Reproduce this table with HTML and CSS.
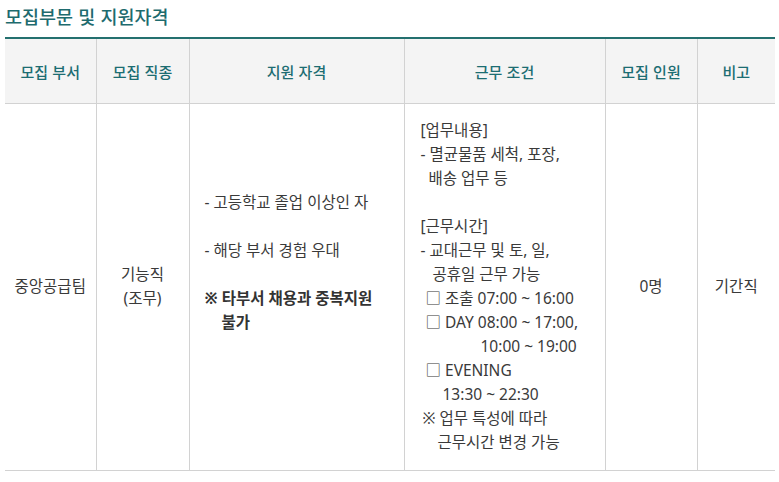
FILE: index.html
```html
<!DOCTYPE html>
<html lang="ko">
<head>
<meta charset="utf-8">
<title>모집부문 및 지원자격</title>
<link rel="stylesheet" href="styles.css">
</head>
<body>
<div class="wrap">
  <h2 class="title">모집부문 및 지원자격</h2>
  <table class="recruit">
    <colgroup>
      <col class="c1"><col class="c2"><col class="c3"><col class="c4"><col class="c5"><col class="c6">
    </colgroup>
    <thead>
      <tr>
        <th>모집 부서</th>
        <th>모집 직종</th>
        <th>지원 자격</th>
        <th>근무 조건</th>
        <th>모집 인원</th>
        <th>비고</th>
      </tr>
    </thead>
    <tbody>
      <tr>
        <td>중앙공급팀</td>
        <td>기능직<br>(조무)</td>
        <td class="left qual">
          <div class="ln">- 고등학교 졸업 이상인 자</div>
          <div class="ln blank"></div>
          <div class="ln">- 해당 부서 경험 우대</div>
          <div class="ln blank"></div>
          <div class="ln strong">※ 타부서 채용과 중복지원</div>
          <div class="ln strong i-bul">불가</div>
          <div class="ln blank"></div>
          <div class="ln blank"></div>
        </td>
        <td class="left cond">
          <div class="ln">[업무내용]</div>
          <div class="ln">- 멸균물품 세척, 포장,</div>
          <div class="ln i1">배송 업무 등</div>
          <div class="ln blank"></div>
          <div class="ln">[근무시간]</div>
          <div class="ln">- 교대근무 및 토, 일,</div>
          <div class="ln i2">공휴일 근무 가능</div>
          <div class="ln i3">□ 조출 07:00 ~ 16:00</div>
          <div class="ln i3">□ DAY 08:00 ~ 17:00,</div>
          <div class="ln i4">10:00 ~ 19:00</div>
          <div class="ln i3">□ EVENING</div>
          <div class="ln i5">13:30 ~ 22:30</div>
          <div class="ln i6">※ 업무 특성에 따라</div>
          <div class="ln i7">근무시간 변경 가능</div>
        </td>
        <td>0명</td>
        <td>기간직</td>
      </tr>
    </tbody>
  </table>
</div>
</body>
</html>
```
FILE: styles.css
```css
html, body {
  margin: 0;
  padding: 0;
  background: #ffffff;
}
body {
  font-family: "Noto Sans", "Noto Sans CJK KR", sans-serif;
  color: #333333;
  font-size: 14px;
}
.wrap {
  padding: 0 4px 0 5px;
}
.title {
  margin: 0;
  padding-top: 3px;
  height: 34px;
  font-size: 18.5px;
  line-height: 26px;
  font-weight: 500;
  color: #1e6b6e;
  font-family: "Noto Sans CJK KR", sans-serif;
}
.recruit {
  width: 770px;
  border-collapse: collapse;
  table-layout: fixed;
  border-top: 2px solid #24706f;
  border-bottom: 1px solid #d2d2d2;
}
.c1 { width: 91px; }
.c2 { width: 93px; }
.c3 { width: 215px; }
.c4 { width: 201px; }
.c5 { width: 92px; }
.c6 { width: 78px; }
.recruit th {
  background: #f4f4f4;
  color: #1c6d72;
  font-weight: 500;
  font-size: 15px;
  height: 64px;
  padding: 0;
  border-left: 1px solid #d2d2d2;
  border-bottom: 1px solid #d2d2d2;
  font-family: "Noto Sans CJK KR", sans-serif;
}
.recruit th:first-child,
.recruit td:first-child {
  border-left: none;
}
.recruit td {
  text-align: center;
  vertical-align: middle;
  border-left: 1px solid #d2d2d2;
  padding: 14px 0 16px 0;
  font-size: 15.5px;
  line-height: 24px;
  color: #3a3a3a;
}
.recruit td.left {
  text-align: left;
}
.qual {
  padding-left: 15px !important;
}
.cond {
  padding-left: 16px !important;
}
.ln {
  height: 24px;
  line-height: 24px;
  white-space: nowrap;
}
.strong {
  font-weight: 700;
  color: #333333;
}
.i-bul { padding-left: 17px; }
.i1 { padding-left: 8px; }
.i2 { padding-left: 12px; }
.i3 { padding-left: 5px; }
.i4 { padding-left: 60px; }
.i5 { padding-left: 22px; }
.i6 { padding-left: 2px; }
.i7 { padding-left: 17px; }
```
